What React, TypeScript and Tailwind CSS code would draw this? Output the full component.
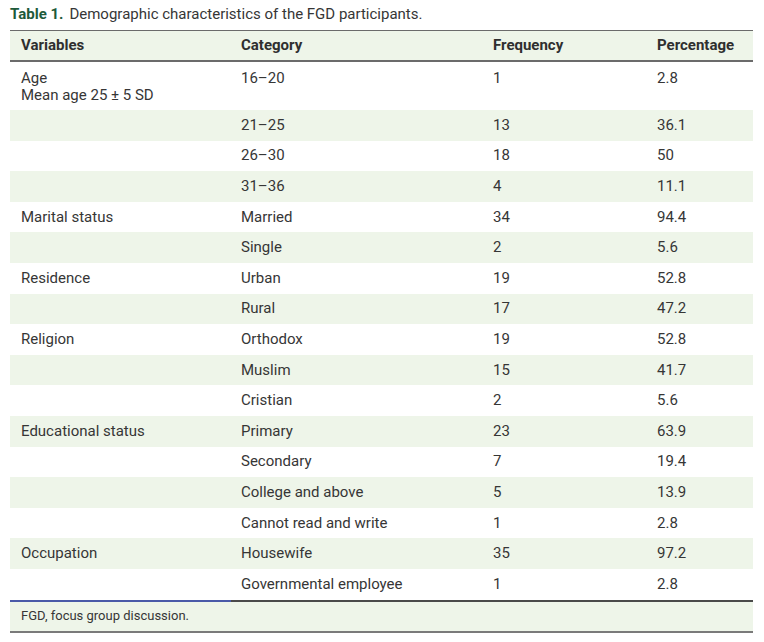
const rows: { v?: string[]; c: string; f: string; p: string }[] = [
  { v: ["Age", "Mean age 25 ± 5 SD"], c: "16–20", f: "1", p: "2.8" },
  { c: "21–25", f: "13", p: "36.1" },
  { c: "26–30", f: "18", p: "50" },
  { c: "31–36", f: "4", p: "11.1" },
  { v: ["Marital status"], c: "Married", f: "34", p: "94.4" },
  { c: "Single", f: "2", p: "5.6" },
  { v: ["Residence"], c: "Urban", f: "19", p: "52.8" },
  { c: "Rural", f: "17", p: "47.2" },
  { v: ["Religion"], c: "Orthodox", f: "19", p: "52.8" },
  { c: "Muslim", f: "15", p: "41.7" },
  { c: "Cristian", f: "2", p: "5.6" },
  { v: ["Educational status"], c: "Primary", f: "23", p: "63.9" },
  { c: "Secondary", f: "7", p: "19.4" },
  { c: "College and above", f: "5", p: "13.9" },
  { c: "Cannot read and write", f: "1", p: "2.8" },
  { v: ["Occupation"], c: "Housewife", f: "35", p: "97.2" },
  { c: "Governmental employee", f: "1", p: "2.8" },
];

export default function App() {
  return (
    <div className="w-[764px] h-[642px] bg-white text-[#363636] font-['Roboto',sans-serif] text-[15px]">
      <div className="pl-[10px] pt-[5px] h-[30px] leading-[19px]">
        <span className="font-bold text-[#1d5a3a]">Table 1.</span>
        <span className="ml-[6px]">Demographic characteristics of the FGD participants.</span>
      </div>
      <div className="ml-[10px] w-[743px]">
        <div className="grid grid-cols-[220px_252px_164px_1fr] h-[32px] items-center bg-[#eef5e9] border-t border-b-2 border-[#6b6b6b] font-bold text-[#2f2f2f] pl-[11px]">
          <div>Variables</div>
          <div>Category</div>
          <div>Frequency</div>
          <div>Percentage</div>
        </div>
        {rows.map((r, i) => (
          <div
            key={i}
            className={`grid grid-cols-[220px_252px_164px_1fr] pl-[11px] leading-[17px] ${
              i === 0 ? "h-[48px] pt-[8px]" : "h-[30.6px] items-center"
            } ${i % 2 === 1 ? "bg-[#eef5e9]" : "bg-white"}`}
          >
            <div>
              {r.v?.map((t) => (
                <div key={t}>{t}</div>
              ))}
            </div>
            <div>{r.c}</div>
            <div>{r.f}</div>
            <div>{r.p}</div>
          </div>
        ))}
        <div className="flex h-[2px]">
          <div className="w-[221px] bg-[#4a5aa8]" />
          <div className="flex-1 bg-[#4a4a4a]" />
        </div>
        <div className="h-[31px] flex items-center pl-[11px] bg-[#eef5e9] border-b-2 border-[#7a7a7a] text-[13px]">
          FGD, focus group discussion.
        </div>
      </div>
    </div>
  );
}
